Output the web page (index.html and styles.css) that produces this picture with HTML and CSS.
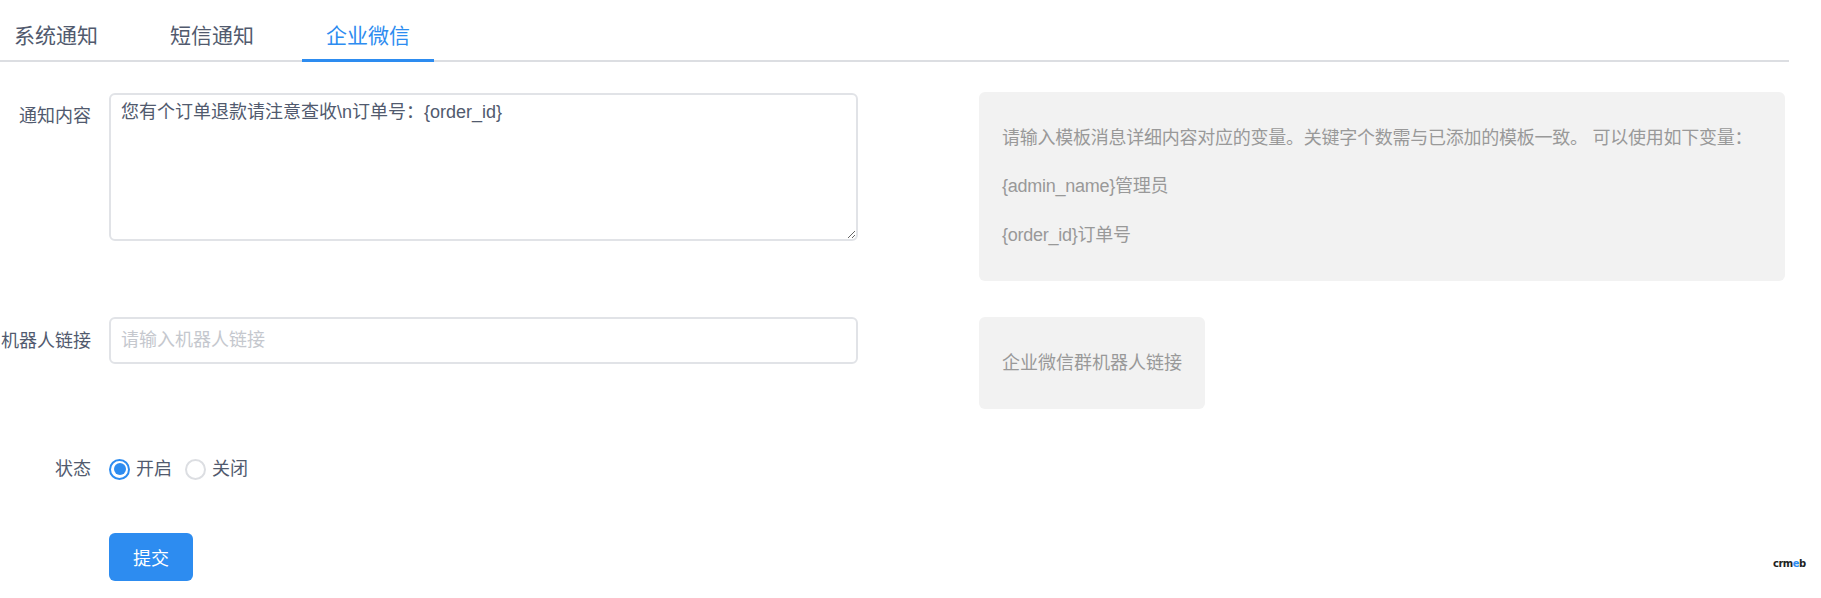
FILE: index.html
```html
<!DOCTYPE html>
<html lang="zh-CN">
<head>
    <meta charset="UTF-8">
    <meta name="viewport" content="width=device-width, initial-scale=1.0">
    <title>企业微信通知</title>
    <link rel="stylesheet" href="styles.css">
</head>
<body>
    <div class="page">
        <!-- Pestañas -->
        <div class="tabs">
            <div class="tab">系统通知</div>
            <div class="tab">短信通知</div>
            <div class="tab active">企业微信</div>
        </div>

        <!-- Formulario -->
        <form class="form">
            <div class="form-item item-content">
                <label class="form-label" for="contenido">通知内容</label>
                <textarea id="contenido" class="textarea">您有个订单退款请注意查收\n订单号：{order_id}</textarea>
                <div class="help">
                    <div>请输入模板消息详细内容对应的变量。关键字个数需与已添加的模板一致。 可以使用如下变量：</div>
                    <div>{admin_name}管理员</div>
                    <div>{order_id}订单号</div>
                </div>
            </div>

            <div class="form-item">
                <label class="form-label" for="robot">机器人链接</label>
                <input type="text" id="robot" class="input" placeholder="请输入机器人链接">
                <div class="help">企业微信群机器人链接</div>
            </div>

            <div class="form-item item-status">
                <label class="form-label">状态</label>
                <div class="radio-group">
                    <label class="radio">
                        <span class="radio-inner checked"></span>开启
                    </label>
                    <label class="radio">
                        <span class="radio-inner"></span>关闭
                    </label>
                </div>
            </div>

            <div class="form-item item-submit">
                <button type="button" class="btn-primary">提交</button>
            </div>
        </form>

        <div class="logo">crm<span class="logo-e">e</span>b</div>
    </div>
</body>
</html>
```

FILE: styles.css
```css
/* General */
body {
    margin: 0;
    font-family: "Liberation Sans", "Noto Sans CJK SC", sans-serif;
    color: #515a6e;
    background: #fff;
}

.page {
    position: relative;
    width: 1821px;
    height: 598px;
    overflow: hidden;
}

/* Pestañas */
.tabs {
    display: flex;
    height: 60px;
    margin-left: -10px;
    margin-right: 32px;
    border-bottom: 2px solid #dcdee2;
}

.tab {
    box-sizing: border-box;
    height: 62px;
    margin-right: 24px;
    margin-bottom: -2px;
    padding: 25px 24px 0;
    font-size: 21px;
    line-height: 22px;
    color: #515a6e;
    border-bottom: 3px solid transparent;
}

.tab.active {
    color: #2d8cf0;
    border-bottom-color: #2d8cf0;
}

/* Formulario */
.form {
    padding-top: 30px;
}

.form-item {
    display: flex;
    align-items: flex-start;
    margin-bottom: 36px;
}

.form-label {
    box-sizing: border-box;
    width: 109px;
    flex-shrink: 0;
    padding: 15px 18px 15px 0;
    font-size: 18px;
    line-height: 18px;
    text-align: right;
    color: #515a6e;
}

.textarea, .input {
    box-sizing: border-box;
    width: 749px;
    flex-shrink: 0;
    font-family: inherit;
    font-size: 18px;
    color: #515a6e;
    border: 2px solid #e1e3e7;
    border-radius: 6px;
    outline: none;
}

.textarea {
    height: 148px;
    margin-top: 1px;
    padding: 4px 10px;
    line-height: 27px;
    resize: vertical;
}

.input {
    height: 47px;
    padding: 0 10px;
    line-height: 43px;
}

.input::placeholder {
    color: #c5c8ce;
}

.help {
    margin-left: 121px;
    padding: 22px 23px;
    background: #f2f2f2;
    border-radius: 6px;
    font-size: 18px;
    line-height: 48px;
    color: #999;
    white-space: nowrap;
}

.item-content .help {
    width: 760px;
    height: 145px;
    line-height: 48.4px;
    letter-spacing: -0.25px;
}

/* Estado */
.item-status {
    margin-bottom: 40px;
}

.radio-group {
    display: flex;
    align-items: center;
    height: 48px;
}

.radio {
    display: flex;
    align-items: center;
    margin-right: 13px;
    font-size: 18px;
    line-height: 18px;
    color: #515a6e;
}

.radio-inner {
    box-sizing: border-box;
    position: relative;
    width: 21px;
    height: 21px;
    margin-right: 6px;
    border: 2px solid #dcdee2;
    border-radius: 50%;
    background: #fff;
}

.radio-inner.checked {
    border-color: #2d8cf0;
}

.radio-inner.checked::after {
    content: "";
    position: absolute;
    top: 2.5px;
    left: 2.5px;
    width: 12px;
    height: 12px;
    border-radius: 50%;
    background: #2d8cf0;
}

/* Botón */
.item-submit {
    padding-left: 109px;
}

.btn-primary {
    width: 84px;
    height: 48px;
    padding: 0;
    font-family: inherit;
    font-size: 18px;
    color: #fff;
    background-color: #2d8cf0;
    border: none;
    border-radius: 6px;
    cursor: pointer;
}

/* Logo */
.logo {
    position: absolute;
    left: 1773px;
    top: 558px;
    font-family: "DejaVu Sans", sans-serif;
    font-size: 10px;
    font-weight: bold;
    letter-spacing: -0.5px;
    color: #222;
}

.logo-e {
    color: #2d8cf0;
}
```
